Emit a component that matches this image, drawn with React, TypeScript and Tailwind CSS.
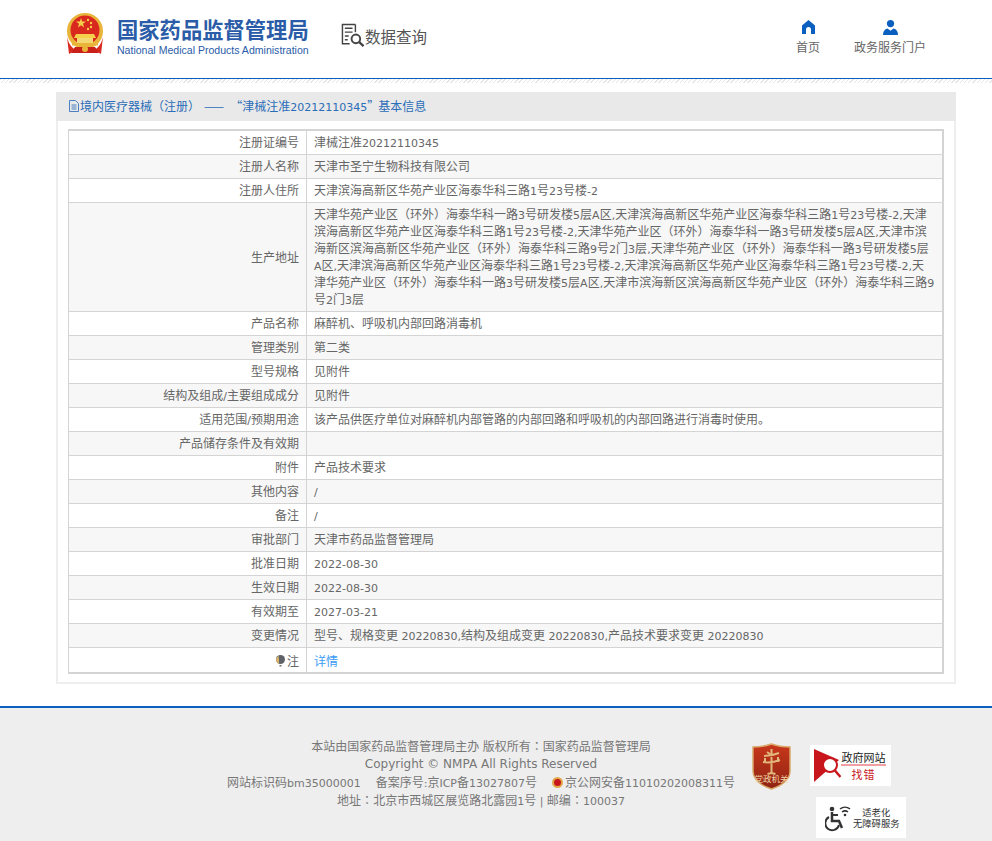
const rows: [string, string][] = [
  ["注册证编号", "津械注准20212110345"],
  ["注册人名称", "天津市圣宁生物科技有限公司"],
  ["注册人住所", "天津滨海高新区华苑产业区海泰华科三路1号23号楼-2"],
  [
    "生产地址",
    "天津华苑产业区（环外）海泰华科一路3号研发楼5层A区,天津滨海高新区华苑产业区海泰华科三路1号23号楼-2,天津滨海高新区华苑产业区海泰华科三路1号23号楼-2,天津华苑产业区（环外）海泰华科一路3号研发楼5层A区,天津市滨海新区滨海高新区华苑产业区（环外）海泰华科三路9号2门3层,天津华苑产业区（环外）海泰华科一路3号研发楼5层A区,天津滨海高新区华苑产业区海泰华科三路1号23号楼-2,天津滨海高新区华苑产业区海泰华科三路1号23号楼-2,天津华苑产业区（环外）海泰华科一路3号研发楼5层A区,天津市滨海新区滨海高新区华苑产业区（环外）海泰华科三路9号2门3层",
  ],
  ["产品名称", "麻醉机、呼吸机内部回路消毒机"],
  ["管理类别", "第二类"],
  ["型号规格", "见附件"],
  ["结构及组成/主要组成成分", "见附件"],
  ["适用范围/预期用途", "该产品供医疗单位对麻醉机内部管路的内部回路和呼吸机的内部回路进行消毒时使用。"],
  ["产品储存条件及有效期", ""],
  ["附件", "产品技术要求"],
  ["其他内容", "/"],
  ["备注", "/"],
  ["审批部门", "天津市药品监督管理局"],
  ["批准日期", "2022-08-30"],
  ["生效日期", "2022-08-30"],
  ["有效期至", "2027-03-21"],
  ["变更情况", "型号、规格变更 20220830,结构及组成变更 20220830,产品技术要求变更 20220830"],
];

// latin runs and centred full-width punctuation need their own font
const Mixed = ({ text }: { text: string }) => (
  <>
    {text.split(/([ -~©]+|[（）：])/).map((part, i) => {
      if (/^[（）：]$/.test(part)) {
        return <span key={i} className="font-['Noto_Sans_CJK_TC',sans-serif] leading-none">{part}</span>;
      }
      if (i % 2 === 1) {
        return <span key={i} className="font-['DejaVu_Sans',sans-serif] text-[11px] leading-none">{part}</span>;
      }
      return part;
    })}
  </>
);

const Emblem = () => (
  <svg width="38" height="42" viewBox="0 0 38 42">
    <circle cx="19" cy="18" r="18" fill="#e8b53a" />
    <circle cx="19" cy="17" r="14.5" fill="#d9281e" />
    <polygon points="15,5 16.2,8.6 20,8.6 17,10.8 18.1,14.4 15,12.2 11.9,14.4 13,10.8 10,8.6 13.8,8.6" fill="#f5cf4a" />
    <circle cx="22" cy="7" r="1.2" fill="#f5cf4a" />
    <circle cx="25" cy="10" r="1.2" fill="#f5cf4a" />
    <circle cx="25" cy="14" r="1.2" fill="#f5cf4a" />
    <circle cx="22" cy="16" r="1.2" fill="#f5cf4a" />
    <path d="M10 21h18l2 4H8z" fill="#f5cf4a" />
    <rect x="11" y="25" width="16" height="5" fill="#f3d873" />
    <rect x="6" y="30" width="26" height="2.5" fill="#e8b53a" />
    <path d="M1 24c2 8 5 11 9 13l-7 4zM37 24c-2 8-5 11-9 13l7 4z" fill="#d9281e" />
    <path d="M9 34h20l4 6H5z" fill="#c9201a" />
    <circle cx="19" cy="36" r="3" fill="#e8b53a" />
  </svg>
);

const QueryIcon = () => (
  <svg width="24" height="25" viewBox="0 0 25 25" fill="none" stroke="#444" strokeWidth="1.5">
    <path d="M15 1H1.500v20H9" />
    <path d="M15 1v8" />
    <path d="M4 5h8M4 9h8M4 13h4M4 17h3" />
    <circle cx="15.500" cy="16" r="4.500" strokeWidth="2" />
    <path d="M19 19.500l4.500 4" strokeWidth="2.500" />
  </svg>
);

const HomeIcon = () => (
  <svg width="15" height="14" viewBox="0 0 15 14" fill="#0a5fbf">
    <path d="M7.500 0L14 5.500V14H10V9.500a2.500 2.500 0 0 0-5 0V14H1V5.500z" />
  </svg>
);

const UserIcon = () => (
  <svg width="15" height="15" viewBox="0 0 15 15" fill="#0a5fbf">
    <circle cx="7.500" cy="3.600" r="3.600" />
    <path d="M0 15c0-3.500 1.500-6 4.500-6.500l3 2.200 3-2.200c3 .5 4.500 3 4.500 6.500z" />
  </svg>
);

const NoteIcon = () => (
  <svg width="11" height="12" viewBox="0 0 11 12" className="mr-[1px] inline-block align-[-1px]">
    <circle cx="5.500" cy="4.500" r="4.500" fill="#5f6368" />
    <path d="M1 4.500a4.500 4.500 0 0 0 3 4.200V4a4 4 0 0 1 0-3.300A4.500 4.500 0 0 0 1 4.500z" fill="#d9b36a" />
    <rect x="4.500" y="10" width="2" height="1.500" fill="#777" />
  </svg>
);

const ShieldBadge = () => (
  <div className="relative h-[47px] w-[39px]">
    <svg width="39" height="47" viewBox="0 0 39 47" className="absolute inset-0">
      <defs>
        <linearGradient id="shield" x1="0" y1="0" x2="0" y2="1">
          <stop offset="0" stopColor="#c9371b" />
          <stop offset="1" stopColor="#8e2413" />
        </linearGradient>
      </defs>
      <path d="M1 4c7 0 13-1 18.500-3C25 3 32 4 38 4v24c0 9-9 15-18.500 18C10 43 1 37 1 28z" fill="url(#shield)" stroke="#d9a86a" strokeWidth="1.500" />
      <path d="M19.500 6v24M12 13c5 0 10-1 15-3M11 19c6 1 12 0 17-2M15 9l3 2M13 15v5M26 14v5M19.500 30l-4 1M19.500 30l4 1" stroke="#e2b77c" strokeWidth="2" fill="none" />
    </svg>
    <span className="absolute left-0 top-[30px] w-full text-center text-[8.500px] leading-[10px] text-[#f3d6a8] whitespace-nowrap">党政机关</span>
  </div>
);

const GovBadge = () => (
  <div className="flex h-[41px] w-[81px] items-center bg-white pl-[4px]">
    <svg width="27" height="33" viewBox="0 0 27 33" className="shrink-0">
      <polygon points="0,0 25,11 0,33" fill="#c8161d" />
      <circle cx="16" cy="16" r="7" fill="white" stroke="#c8161d" strokeWidth="2" />
      <path d="M20.500 21l6 7" stroke="#c8161d" strokeWidth="2.500" />
    </svg>
    <div className="w-[45px] text-center">
      <div className="border-b-2 border-[#f0a0a4] text-[11px] leading-[14px] text-[#222] whitespace-nowrap">政府网站</div>
      <div className="mt-[1px] text-[11px] leading-[15px] tracking-[1px] text-[#c8161d]">找错</div>
    </div>
  </div>
);

const AgeBadge = () => (
  <div className="flex h-[41px] w-[90px] items-center bg-white pl-[9px]">
    <svg width="28" height="28" viewBox="0 0 28 28" className="shrink-0" fill="none" stroke="#333">
      <circle cx="7" cy="5" r="2.300" fill="#333" stroke="none" />
      <path d="M7 8v9h7l3 7" strokeWidth="2.500" />
      <path d="M7 11h6" strokeWidth="2" />
      <path d="M4 13a7 7 0 1 0 10 8" strokeWidth="2" />
      <path d="M15 5a8 8 0 0 1 10 0M17 8a5 5 0 0 1 6 0" strokeWidth="1.500" />
      <circle cx="20" cy="11" r="1.300" fill="#333" stroke="none" />
    </svg>
    <div className="text-center text-[9.300px] leading-[11px] text-[#333] whitespace-nowrap">
      <div>适老化</div>
      <div>无障碍服务</div>
    </div>
  </div>
);

export default function App() {
  return (
    <div className="min-h-[841px] bg-white text-[12px] font-['Noto_Sans_CJK_SC',sans-serif] text-[#666]">
      {/* Header */}
      <header className="flex h-[78px] items-start pl-[66px]">
        <div className="mt-[13px]">
          <Emblem />
        </div>
        <div className="ml-[13px] mt-[15px] w-[195px]">
          <div className="text-[21.300px] leading-[28px] font-bold whitespace-nowrap text-[#2a5ca8]">国家药品监督管理局</div>
          <div className="mt-[1px] text-[10.550px] leading-[13px] font-['Liberation_Sans',sans-serif] whitespace-nowrap text-[#2a5ca8]">
            National Medical Products Administration
          </div>
        </div>
        <div className="ml-[29px] mt-[23px] flex items-center">
          <QueryIcon />
          <span className="text-[15.500px] leading-[24px] text-[#555] whitespace-nowrap">数据查询</span>
        </div>
        <nav className="ml-auto mr-[66px] mt-[20px] flex gap-[34px]">
          <a className="flex w-[24px] flex-col items-center">
            <HomeIcon />
            <span className="mt-[4px] leading-[18px] whitespace-nowrap">首页</span>
          </a>
          <a className="flex w-[72px] flex-col items-center">
            <UserIcon />
            <span className="mt-[3px] leading-[18px] whitespace-nowrap">政务服务门户</span>
          </a>
        </nav>
      </header>
      <div className="h-[1px] bg-[#0a5fbf]" />
      <div className="h-[4px] bg-[repeating-linear-gradient(135deg,#e6e6e6_0,#e6e6e6_1px,#ffffff_1px,#ffffff_3px)]" />

      {/* Card */}
      <main className="mx-[56px] mt-[9px] w-[900px] border-x-2 border-b-2 border-[#eeeeee] pb-[8px]">
        <h2 className="-mx-[2px] flex h-[29px] items-center bg-[#e9e9e9] pb-[2px] pl-[13px] leading-[27px] whitespace-nowrap text-[#2a6db8]">
          <svg width="10" height="12" viewBox="0 0 10 12" fill="none" stroke="#4a7fc0" className="mr-[1px]">
            <path d="M.5.5h6l3 3v8h-9zM2.500 5h5M2.500 7h5M2.500 9h5" />
          </svg>
          <span>
            <Mixed text="境内医疗器械（注册）" />
            <span className="ml-[4px] tracking-[2px]">——</span>
            <span className="ml-[4px]">“</span>
            <Mixed text="津械注准20212110345" />
            <span>”</span>
            <span className="-ml-[1px]">基本信息</span>
          </span>
        </h2>
        <table className="ml-[10px] mt-[8px] w-[876px] table-fixed border-collapse border-2 border-[#d4d4d4] border-l-[1px]">
          <colgroup>
            <col className="w-[238px]" />
            <col />
          </colgroup>
          <tbody>
            {rows.map(([label, value], i) => (
              <tr key={label} className={i % 2 === 1 ? "bg-[#f7f7f7]" : "bg-white"}>
                <td className="border border-[#d4d4d4] px-[7px] pt-[2px] pb-[4px] text-right leading-[17px]">
                  <Mixed text={label} />
                </td>
                <td className="border border-[#d4d4d4] px-[7px] pt-[2px] pb-[4px] leading-[17px] break-all">
                  <Mixed text={value} />
                </td>
              </tr>
            ))}
            <tr className="bg-white">
              <td className="border border-[#d4d4d4] px-[7px] py-[3px] text-right leading-[17px]">
                <NoteIcon />注
              </td>
              <td className="border border-[#d4d4d4] px-[7px] pt-[4px] pb-[2px] leading-[18px] text-[#3b9bf5]">详情</td>
            </tr>
          </tbody>
        </table>
      </main>

      {/* Footer */}
      <footer className="mt-[22px] h-[135px] border-t-2 border-[#0a5fbf] bg-[#eeeeee]">
        <div className="flex pl-[227px]">
          <div className="mt-[29px] w-[508px] text-center leading-[18px] whitespace-nowrap text-[#777]">
            <p><Mixed text="本站由国家药品监督管理局主办 版权所有：国家药品监督管理局" /></p>
            <p className="font-['DejaVu_Sans',sans-serif]">Copyright © NMPA All Rights Reserved</p>
            <p className="flex items-center justify-between">
              <span><Mixed text="网站标识码bm35000001" /></span>
              <span><Mixed text="备案序号:京ICP备13027807号" /></span>
              <span className="flex items-center">
                <span className="mr-[2px] inline-block h-[11px] w-[11px] rounded-full border-2 border-[#e2a94a] bg-[#c8161d]" />
                <span><Mixed text="京公网安备11010202008311号" /></span>
              </span>
            </p>
            <p><Mixed text="地址：北京市西城区展览路北露园1号 | 邮编：100037" /></p>
          </div>
          <div className="ml-[17px] mt-[35px]">
            <ShieldBadge />
          </div>
          <div className="ml-[19px] mt-[37px] flex flex-col items-start gap-[11px]">
            <GovBadge />
            <div className="ml-[6px]">
              <AgeBadge />
            </div>
          </div>
        </div>
      </footer>
    </div>
  );
}
